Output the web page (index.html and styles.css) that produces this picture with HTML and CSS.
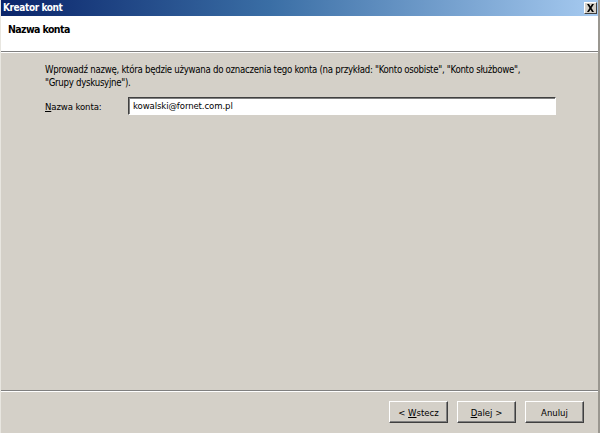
FILE: index.html
```html
<!DOCTYPE html>
<html>
<head>
<meta charset="utf-8">
<link rel="stylesheet" href="styles.css">
</head>
<body>
<div class="window">
  <div class="titlebar">
    <span class="title">Kreator kont</span>
    <span class="close"><svg width="9" height="8" viewBox="0 0 9 8"><path d="M1 0h2l1.5 2.5L6 0h2L5.5 4 8 8H6L4.5 5.5 3 8H1l2.5-4z" fill="#000"/></svg></span>
  </div>
  <div class="header">
    <div class="header-title">Nazwa konta</div>
  </div>
  <div class="body">
    <p class="intro">Wprowadź nazwę, która będzie używana do oznaczenia tego konta (na przykład: "Konto osobiste", "Konto służbowe",<br>"Grupy dyskusyjne").</p>
    <div class="field">
      <label class="label"><u>N</u>azwa konta:</label>
      <div class="input">kowalski@fornet.com.pl</div>
    </div>
  </div>
  <div class="footer">
    <button class="btn">&lt; <u>W</u>stecz</button>
    <button class="btn"><u>D</u>alej &gt;</button>
    <button class="btn">Anuluj</button>
  </div>
</div>
</body>
</html>
```
FILE: styles.css
```css
html, body {
  margin: 0;
  padding: 0;
  width: 600px;
  height: 433px;
  overflow: hidden;
  background: #d4d0c8;
  font-family: "DejaVu Sans Condensed", "DejaVu Sans", sans-serif;
  font-size: 10px;
}
.window {
  width: 600px;
  height: 433px;
  box-sizing: border-box;
  display: flex;
  flex-direction: column;
  border-left: 1px solid #e8e6e0;
  border-right: 2px solid #9a9790;
  background: #d4d0c8;
}
.titlebar {
  height: 16px;
  flex: none;
  display: flex;
  align-items: center;
  justify-content: space-between;
  background: linear-gradient(to right, #0a246a 0%, #3a6ea5 45%, #a6caf0 100%);
  padding: 0 1px 0 2px;
}
.title {
  color: #fff;
  font-weight: bold;
  font-size: 10px;
  letter-spacing: -0.4px;
  line-height: 14px;
}
.close {
  width: 13px;
  height: 12px;
  box-sizing: border-box;
  background: #d4d0c8;
  border: 1px solid;
  border-color: #fff #404040 #404040 #fff;
  display: flex;
  align-items: center;
  justify-content: center;
}
.header {
  height: 36px;
  flex: none;
  background: #fff;
  border-bottom: 1px solid #808080;
  box-shadow: 0 1px 0 #fff;
  padding: 6px 0 0 7px;
  box-sizing: border-box;
}
.header-title {
  font-weight: bold;
  font-size: 10.5px;
  letter-spacing: -0.6px;
  line-height: 14px;
  color: #000;
}
.body {
  flex: 1;
  padding: 11px 40px 0 44px;
}
.intro {
  margin: 0;
  font-size: 9.6px;
  letter-spacing: -0.28px;
  line-height: 13px;
  color: #000;
  white-space: nowrap;
}
.field {
  display: flex;
  align-items: center;
  margin-top: 8px;
}
.label {
  width: 83px;
  font-size: 9.5px;
  letter-spacing: -0.1px;
  color: #000;
}
.input {
  width: 428px;
  height: 18px;
  box-sizing: border-box;
  background: #fff;
  border: 1px solid;
  border-color: #404040 #fff #fff #404040;
  box-shadow: inset 1px 1px 0 #808080;
  padding: 1px 4px;
  font-size: 9.5px;
  letter-spacing: -0.1px;
  line-height: 14px;
}
.footer {
  height: 43px;
  flex: none;
  border-top: 1px solid #808080;
  box-shadow: inset 0 1px 0 #fff;
  display: flex;
  justify-content: flex-end;
  align-items: flex-start;
  padding: 10px 14px 0 0;
  box-sizing: border-box;
  gap: 9px;
}
.btn {
  width: 59px;
  height: 22px;
  margin: 0;
  background: #d4d0c8;
  border: 1px solid;
  border-color: #fff #404040 #404040 #fff;
  box-shadow: inset -1px -1px 0 #808080;
  font-family: "DejaVu Sans Condensed", "DejaVu Sans", sans-serif;
  font-size: 9.5px;
  color: #000;
  padding: 0;
}
```
